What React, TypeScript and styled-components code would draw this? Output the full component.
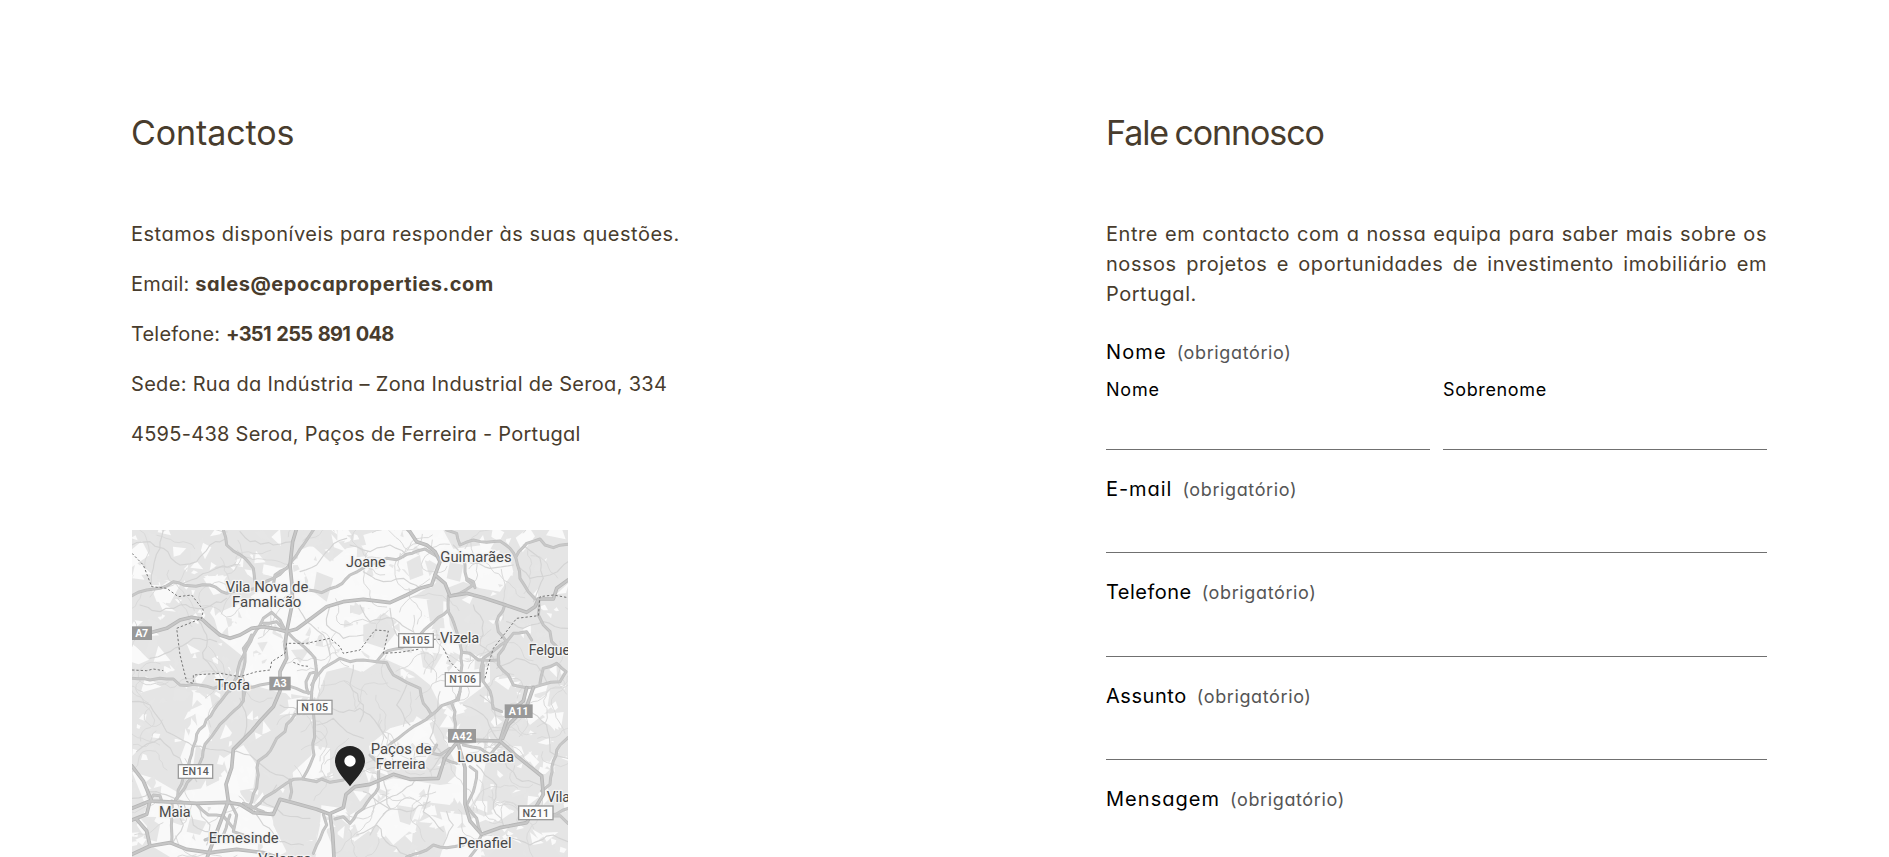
import React from 'react';
import styled, { createGlobalStyle } from 'styled-components';

const GlobalStyle = createGlobalStyle`
  html, body { margin: 0; padding: 0; background: #fff; overflow: hidden; }
  * { box-sizing: border-box; }
`;

const Page = styled.main`
  display: grid;
  grid-template-columns: 661px 661px;
  column-gap: 314px;
  height: 857px;
  padding: 112px 0 0 131px;
  overflow: hidden;
  font-family: Inter, 'Open Sans', sans-serif;
  font-feature-settings: 'cv11';
  font-size: 20px;
  line-height: 30px;
  color: #483c2d;
`;

const Column = styled.section`
  display: flex;
  flex-direction: column;
`;

const Heading = styled.h2<{ $tracking: number }>`
  margin: 0 0 65px;
  font-size: 34px;
  font-weight: 400;
  line-height: 42px;
  font-feature-settings: normal;
  letter-spacing: ${(p) => p.$tracking}px;
  word-spacing: -2px;
`;

const ContactList = styled.div`
  display: flex;
  flex-direction: column;
  gap: 20px;
  margin-bottom: 81px;
`;

const ContactLine = styled.p<{ $tracking: number }>`
  margin: 0;
  white-space: nowrap;
  letter-spacing: ${(p) => p.$tracking}px;
`;

const Strong = styled.strong<{ $tracking: number; $wordGap?: number }>`
  font-weight: 700;
  letter-spacing: ${(p) => p.$tracking}px;
  word-spacing: ${(p) => p.$wordGap ?? 0}px;
`;

const MapFrame = styled.div`
  flex: none;
  width: 436px;
  height: 327px;
  margin-left: 1px;
  overflow: hidden;
`;

const Intro = styled.p`
  margin: 0 0 28px;
  text-align: justify;
  letter-spacing: 0.54px;
`;

const Form = styled.form`
  display: flex;
  flex-direction: column;
  gap: 24.3px;
`;

const Field = styled.div`
  display: flex;
  flex-direction: column;
`;

const Label = styled.label<{ $tracking: number }>`
  display: flex;
  align-items: baseline;
  height: 30px;
  color: #000;
  letter-spacing: ${(p) => p.$tracking}px;
`;

const Required = styled.span`
  margin-left: 10px;
  font-size: 18px;
  line-height: 22px;
  letter-spacing: 0.62px;
  color: #555;
`;

const NameRow = styled.div`
  display: grid;
  grid-template-columns: 1fr 1fr;
  column-gap: 13px;
  margin-top: 9px;
`;

const SubLabel = styled.label<{ $tracking: number }>`
  font-size: 18px;
  line-height: 27px;
  color: #000;
  letter-spacing: ${(p) => p.$tracking}px;
`;

const Input = styled.input<{ $height: number }>`
  width: 100%;
  height: ${(p) => p.$height}px;
  padding: 0;
  border: 0;
  border-bottom: 1px solid #707070;
  border-radius: 0;
  background: transparent;
  outline: none;
`;

const MapSvg = styled.svg`
  display: block;
  width: 436px;
  height: 327px;
  font-family: Roboto, sans-serif;
`;

const openAreas = [
  '250,270 330,235 400,190 470,120 520,90 580,120 660,90 660,330 700,420 660,560 560,520 440,500 330,470 345,400 270,340',
  '500,80 545,60 600,110 650,70 760,50 840,60 900,70 930,130 890,190 780,260 660,240 560,220 520,170',
  '700,30 750,15 940,15 980,90 950,160 860,120 780,120 720,100',
  '640,270 760,240 830,215 950,230 960,300 1000,380 1080,400 1080,470 1000,530 930,540 900,480 850,440 760,400 700,440 640,400',
  '900,80 1060,60 1140,100 1150,140 1110,200 1050,190 1000,170 950,190 920,150',
  '6,740 70,760 140,800 220,790 280,760 320,790 350,830 430,850 430,900 470,980 440,996 120,996 60,960 20,900 50,850',
  '190,500 240,510 250,560 200,650 190,720 170,760 150,700 180,620',
  '280,700 340,660 380,720 370,790 310,800',
  '720,780 790,760 870,770 930,780 1000,770 960,840 880,830 860,900 790,960 740,900 660,960 660,870 710,840',
  '740,600 800,560 840,560 900,600 920,650 880,720 790,720 730,690',
  '940,640 1000,660 1060,650 1070,700 1050,800 1010,860 970,800 980,720',
  '1160,500 1230,520 1260,498 1250,560 1200,600 1170,560',
  '480,690 540,660 600,670 600,740 550,770 490,760',
  '930,860 1010,870 1060,920 1110,940 1060,996 930,996 950,930',
  '60,180 110,165 150,180 120,235 80,230',
  '220,160 280,150 290,200 250,210',
  '575,830 600,850 590,920 620,996 550,996 570,900',
];

const greenAreas = [
  '560,140 610,160 590,230 550,200',
  '700,300 760,280 800,320 760,370 700,350',
  '830,110 870,90 880,150 840,165',
  '590,440 650,425 720,450 770,440 810,480 860,500 880,540 850,590 780,610 730,650 700,680 640,650 570,650 560,520',
  '890,225 940,215 940,270 900,290',
  '1000,290 1050,300 1060,350 1000,350',
  '420,860 500,830 560,860 560,940 500,960 440,920',
  '490,775 610,770 650,800 640,850 500,830',
  '350,660 450,600 540,560 545,690 480,750 390,740',
  '960,110 1000,120 990,170 950,160',
  '180,880 230,890 210,930 170,920',
  '60,880 90,900 80,950 40,940',
  '800,840 860,850 840,900 810,890',
];

const localRoads = [
  '6,60 60,50 100,70 150,120 200,110 240,60 290,40', '100,15 90,70 70,130 65,185', '150,180 200,160 260,130 330,120',
  '30,240 90,260 150,240 220,250 290,220', '60,400 120,380 190,340 260,350', '200,280 230,330 220,400 260,445',
  '330,20 360,50 430,60 490,50', '510,140 560,120 600,70 650,40', '600,240 590,300 640,340 700,330',
  '500,240 530,290 580,330 600,390', '660,60 720,80 780,60 830,90', '700,140 760,170 820,160 870,190',
  '690,240 720,290 790,280 850,320', '780,250 800,330 850,350 930,330', '1030,240 1060,290 1050,360 1090,400',
  '970,60 1010,110 1080,130 1150,120', '1160,120 1200,160 1260,150 1314,110', '1180,60 1230,100 1240,160 1210,230',
  '1130,290 1180,310 1240,290 1314,310', '1100,430 1160,400 1220,420 1250,470', '670,420 660,480 700,540 690,590',
  '605,550 640,562 690,550 720,570 750,610 770,640', '830,480 800,540 840,600', '930,500 900,640 940,690 900,740',
  '6,530 60,540 110,620 190,665 280,675 360,690 420,740 480,765', '20,680 90,640 150,700 200,770',
  '330,520 350,580 340,640', '450,540 520,560', '6,820 80,800 160,830 190,900 260,930', '140,830 160,900 130,950',
  '200,840 240,900 230,960', '370,850 400,900 450,950 520,960', '440,780 400,830 460,870 540,880',
  '700,800 760,840 830,860 900,830', '760,760 780,850 720,930', '690,860 800,810 870,760', '900,780 880,860 940,920',
  '1040,720 1100,780 1090,850 1120,900', '1000,540 1060,570 1110,650', '1050,510 1090,540 1100,600',
  '1200,560 1250,600 1260,680 1314,700', '1110,700 1160,760 1230,780', '1130,930 1200,960 1270,930 1314,950',
  '680,930 740,900 780,960 830,990', '950,860 970,900 940,960', '560,600 610,580 650,620 700,640',
];

const streets = [
  '6,212 50,195 90,190 130,170 180,182 240,180 290,205 375,190 430,160 480,120',
  '535,195 575,203 620,185 660,150 710,122 770,100 800,104 830,88 885,72 905,85 925,97',
  '280,15 290,60 310,78 345,100 370,130 375,170', '550,15 520,60 500,90 470,130 435,150 430,180',
  '950,15 980,25 990,60 1030,45 1070,52 1110,48 1140,70 1158,100 1170,160 1195,200 1215,222',
  '1158,95 1190,55 1230,42 1245,60 1270,68 1314,58', '1000,90 1005,120 1010,160 1030,170 1035,188',
  '955,213 955,260 980,320 995,380 993,440 990,498 985,525', '1010,165 1030,180 990,205 960,213',
  '955,255 900,300 860,345 810,370 760,385 740,410 700,405 660,410 630,400 580,430 560,455 545,480',
  '740,410 770,413 790,450 830,472 870,490 880,535 905,570 935,542 980,525 990,500',
  '905,568 850,605 790,650 760,672',
  '470,320 510,355 555,400 560,440 550,470 545,500 550,560 552,690 540,720 518,761 490,763 450,788 420,808 360,853',
  '380,315 350,370 330,410 320,460', '365,330 340,370 345,410 335,450', '385,310 400,280 425,262 450,285 465,315', '400,295 440,290 470,320',
  '6,460 60,465 90,460 130,462 150,480 190,478 250,490 330,470 350,488 390,480 420,475',
  '482,485 520,500 545,505', '535,505 528,470 540,445 560,440', '320,455 300,498', '335,450 345,498 340,520',
  '295,498 250,558 200,628 185,688 160,758 135,828', '340,498 340,528 270,598 225,658 210,713 165,788 135,828',
  '495,568 470,598 465,620 440,640 430,660 410,690 385,708 380,788 355,848',
  '125,828 125,955', '60,826 70,810 90,812 95,828', '200,838 235,870 280,873 310,910', '300,830 320,870 310,920 340,930',
  '518,762 560,770 575,762 600,772 640,765', '480,765 485,800 480,820', '340,835 400,860',
  '225,945 280,930 300,870', '580,868 590,900 560,960 550,985',
  '1125,238 1100,290 1105,320 1130,350 1105,390 1105,420 1135,450 1150,480 1190,488 1240,478 1290,470 1308,440 1280,415 1240,430 1230,475',
  '1225,222 1225,270 1240,300 1260,320 1265,350 1280,365', '1050,470 1060,400 1100,370 1130,350 1150,325 1190,320 1205,345',
  '995,382 1020,385 1045,405 1100,405', '720,690 750,718 745,788 700,850 680,865 660,895 640,875 615,882',
  '965,535 975,560 975,615', '1060,420 1060,470 1080,498 1090,550 1115,560',
  '1235,798 1260,778 1270,708 1290,660 1314,638', '1240,880 1314,850', '1240,875 1290,872 1314,895',
  '1055,928 1040,970 1020,996', '1000,960 950,968 910,960 890,975 850,988 830,996', '1020,725 1040,740 1030,800 1010,840 1040,880 1055,928',
  '920,660 905,685 930,690 960,670', '940,700 980,715', '1000,660 1050,670 1080,690 1110,655',
];

const highways = [
  '6,322 66,322 110,310 150,285 185,277 215,282 240,305 270,330 300,340 330,330 365,310 400,305 440,312 470,320 500,312 550,275 590,245 640,230 700,223 780,233 830,210 870,190 905,180 915,150 930,110 915,80 890,60 860,50 840,20 830,10',
  '915,150 945,175 960,213 1010,205 1060,218 1120,238 1190,262 1215,245 1225,222 1270,222 1280,190 1314,165',
  '500,10 488,50 480,120 485,170 488,230 478,280 470,320 465,360 470,400 450,440 450,498 430,545 390,588 365,618 310,673 305,728 288,778 295,828 280,868 250,948 232,996',
  '6,723 40,768 65,828 100,830 200,835 290,832 330,838 370,863 430,868 450,823 490,833 560,853 600,868 608,928 612,996',
  '6,850 60,828 50,868 6,885', '20,883 50,918 60,963', '6,988 60,963 120,953 170,973 240,983 320,973 400,983 440,996',
  '600,866 640,848 648,808 675,785 720,778 790,748 840,763 925,760 945,698 980,653 1040,646 1110,648 1160,693 1235,753 1240,808 1190,893 1110,908 1055,928 1020,888 1005,838 1005,728 985,658',
  '1110,648 1125,600 1140,560 1180,528 1190,488', '1118,640 1135,600 1190,545 1210,488',
];

const boundaries = [
  '6,85 40,120 65,185 110,190 145,215 185,210 220,255 215,280 140,310 150,390 170,470 190,475 190,450 270,445 330,455 380,440 420,435 425,410 465,385 470,355 530,355 600,340 630,365 640,385 690,375 735,315 775,318 760,385 810,382 870,372',
  '910,343 930,343', '940,370 960,410 990,440', '1065,460 1075,420 1090,370 1160,280 1225,272 1230,215 1270,210 1314,218', '6,435 50,437 70,432 100,437',
  '490,412 515,422 535,424',
];

const places: { text: string; x: number; y: number; width: number }[] = [
  { text: 'Vila Nova de', x: 287, y: 202, width: 248 },
  { text: 'Famalicão', x: 306, y: 247, width: 208 },
  { text: 'Joane', x: 648, y: 127, width: 119 },
  { text: 'Guimarães', x: 931, y: 112, width: 214 },
  { text: 'Vizela', x: 930, y: 355, width: 118 },
  { text: 'Felgue', x: 1196, y: 390, width: 124 },
  { text: 'Trofa', x: 255, y: 496, width: 105 },
  { text: 'Paços de', x: 722, y: 688, width: 183 },
  { text: 'Ferreira', x: 737, y: 733, width: 150 },
  { text: 'Lousada', x: 982, y: 712, width: 170 },
  { text: 'Vila', x: 1250, y: 830, width: 70 },
  { text: 'Maia', x: 87, y: 876, width: 95 },
  { text: 'Ermesinde', x: 236, y: 955, width: 210 },
  { text: 'Penafiel', x: 984, y: 970, width: 161 },
  { text: 'Valongo', x: 385, y: 1016, width: 160 },
];

const shields: { text: string; x: number; y: number; w: number; motorway?: boolean }[] = [
  { text: 'A7', x: 4, y: 304, w: 62, motorway: true },
  { text: 'A3', x: 418, y: 455, w: 64, motorway: true },
  { text: 'A11', x: 1124, y: 538, w: 84, motorway: true },
  { text: 'A42', x: 954, y: 612, w: 84, motorway: true },
  { text: 'N105', x: 806, y: 326, w: 104 },
  { text: 'N106', x: 946, y: 443, w: 104 },
  { text: 'N105', x: 502, y: 526, w: 104 },
  { text: 'EN14', x: 145, y: 719, w: 103 },
  { text: 'N211', x: 1166, y: 843, w: 103 },
];

// Repeatable pseudo-random numbers, so the terrain is the same on every render.
function sequence(seed: number) {
  let s = seed;
  return () => {
    s = (s * 16807) % 2147483647;
    return s / 2147483647;
  };
}

// Small irregular, sharp-cornered parcels of land.
function makeParcels(count: number, seed: number) {
  const rnd = sequence(seed);
  return Array.from({ length: count }, () => {
    const cx = rnd() * 1310;
    const cy = 15 + rnd() * 980;
    const size = 12 + rnd() * rnd() * 40;
    const corners = 3 + Math.floor(rnd() * 2);
    const turn = rnd() * 6;
    const points = Array.from({ length: corners }, (_, k) => {
      const a = turn + (k / corners) * Math.PI * 2 + rnd() * 0.9;
      const r = size * (0.2 + rnd());
      return `${(cx + Math.cos(a) * r).toFixed(0)},${(cy + Math.sin(a) * r).toFixed(0)}`;
    });
    return points.join(' ');
  });
}

// Faint country lanes that wander across the terrain.
function makeLanes(count: number, seed: number) {
  const rnd = sequence(seed);
  return Array.from({ length: count }, () => {
    let x = rnd() * 1310;
    let y = rnd() * 1000;
    let a = rnd() * 6.28;
    const points = [`${x.toFixed(0)},${y.toFixed(0)}`];
    const steps = 7 + Math.floor(rnd() * 10);
    for (let i = 0; i < steps; i += 1) {
      a += (rnd() - 0.5) * 1.5;
      x += Math.cos(a) * 14;
      y += Math.sin(a) * 14;
      points.push(`${x.toFixed(0)},${y.toFixed(0)}`);
    }
    return points.join(' ');
  });
}

// Adds small bends between the given points of a road.
function windRoads(items: string[], seed: number, amount: number) {
  const rnd = sequence(seed);
  return items.map((item) => {
    const pts = item.split(' ').map((p) => p.split(',').map(Number));
    const out: string[] = [];
    pts.forEach(([x, y], i) => {
      out.push(`${x},${y}`);
      const next = pts[i + 1];
      if (!next) return;
      const length = Math.hypot(next[0] - x, next[1] - y);
      const pieces = Math.floor(length / 17);
      for (let k = 1; k < pieces; k += 1) {
        const f = k / pieces;
        const dx = (rnd() - 0.5) * amount;
        const dy = (rnd() - 0.5) * amount;
        out.push(`${(x + (next[0] - x) * f + dx).toFixed(1)},${(y + (next[1] - y) * f + dy).toFixed(1)}`);
      }
    });
    return out.join(' ');
  });
}

const clearings = makeParcels(430, 4217);
const groves = makeParcels(200, 911);
const lanes = makeLanes(130, 3301);
const windingLocal = windRoads(localRoads, 77, 10);
const windingStreets = windRoads(streets, 123, 6);

const Lines = ({ items, color, width }: { items: string[]; color: string; width: number }) => (
  <g fill="none" stroke={color} strokeWidth={width} strokeLinejoin="round" strokeLinecap="round">
    {items.map((points) => (
      <polyline key={points} points={points} />
    ))}
  </g>
);

const Areas = ({ items, color }: { items: string[]; color: string }) => (
  <g fill={color}>
    {items.map((points, i) => (
      <polygon key={i} points={points} />
    ))}
  </g>
);

const LocationMap = () => (
  <MapSvg viewBox="6 15 1308 981" role="img" aria-label="Mapa">
    <rect x="0" y="0" width="1320" height="1000" fill="#e5e5e5" />
    <Areas items={openAreas} color="#f9f9f9" />
    <Areas items={groves} color="#e6e6e6" />
    <Areas items={clearings} color="#fafafa" />
    <Areas items={greenAreas} color="#e5e5e5" />
    <Lines items={lanes} color="#dadada" width={3} />
    <Lines items={windingLocal} color="#d4d4d4" width={3.5} />
    <Lines items={windingStreets} color="#bfbfbf" width={9} />
    <Lines items={windingStreets} color="#c8c8c8" width={5} />
    <Lines items={highways} color="#b6b6b6" width={11} />
    <Lines items={highways} color="#c6c6c6" width={6} />
    <g fill="none" stroke="#777" strokeWidth="3" strokeDasharray="7 6">
      {boundaries.map((points) => (
        <polyline key={points} points={points} />
      ))}
    </g>
    {shields.map(({ text, x, y, w, motorway }) => (
      <g key={`${text}-${x}`}>
        <rect x={x} y={y} width={w} height={41} fill={motorway ? '#999' : '#fcfcfc'} stroke={motorway ? 'none' : '#9b9b9b'} strokeWidth="4" />
        <text
          x={x + w / 2}
          y={y + 32}
          textAnchor="middle"
          fontSize="32"
          fontWeight={motorway ? 700 : 500}
          fill={motorway ? '#fff' : '#5c5c5c'}
          textLength={w - (motorway ? 24 : 23)}
        >
          {text}
        </text>
      </g>
    ))}
    <g fontSize="42" fill="#484848" stroke="#f4f4f4" strokeWidth="8" strokeLinejoin="round" paintOrder="stroke">
      {places.map(({ text, x, y, width }) => (
        <text key={`${text}-${x}`} x={x} y={y} textLength={width} lengthAdjust="spacingAndGlyphs">
          {text}
        </text>
      ))}
    </g>
    <path d="M660 663C635 663 615 683 615 708C615 739 650 768 660 784C670 768 705 739 705 708C705 683 685 663 660 663Z" fill="#222" />
    <circle cx="660" cy="708" r="17" fill="#fff" />
  </MapSvg>
);

const fields = [
  { id: 'email', label: 'E-mail', tracking: 0.95 },
  { id: 'telefone', label: 'Telefone', tracking: 0.48 },
  { id: 'assunto', label: 'Assunto', tracking: 0.55 },
  { id: 'mensagem', label: 'Mensagem', tracking: 1.03 },
];

export default function App() {
  return (
    <>
      <GlobalStyle />
      <Page>
        <Column>
          <Heading $tracking={-0.1}>Contactos</Heading>
          <ContactList>
            <ContactLine $tracking={0.5}>Estamos disponíveis para responder às suas questões.</ContactLine>
            <ContactLine $tracking={0.2}>
              Email: <Strong $tracking={0.57}>sales@epocaproperties.com</Strong>
            </ContactLine>
            <ContactLine $tracking={0.18}>
              Telefone: <Strong $tracking={-0.75} $wordGap={1.6}>+351 255 891 048</Strong>
            </ContactLine>
            <ContactLine $tracking={0.31}>Sede: Rua da Indústria – Zona Industrial de Seroa, 334</ContactLine>
            <ContactLine $tracking={0.27}>4595-438 Seroa, Paços de Ferreira - Portugal</ContactLine>
          </ContactList>
          <MapFrame>
            <LocationMap />
          </MapFrame>
        </Column>
        <Column>
          <Heading $tracking={-1.1}>Fale connosco</Heading>
          <Intro>
            Entre em contacto com a nossa equipa para saber mais sobre os nossos projetos e oportunidades de investimento
            imobiliário em Portugal.
          </Intro>
          <Form>
            <Field>
              <Label as="div" $tracking={1.1}>
                Nome <Required>(obrigatório)</Required>
              </Label>
              <NameRow>
                <Field>
                  <SubLabel htmlFor="nome" $tracking={0.8}>Nome</SubLabel>
                  <Input id="nome" $height={46.7} />
                </Field>
                <Field>
                  <SubLabel htmlFor="sobrenome" $tracking={0.65}>Sobrenome</SubLabel>
                  <Input id="sobrenome" $height={46.7} />
                </Field>
              </NameRow>
            </Field>
            {fields.map(({ id, label, tracking }) => (
              <Field key={id}>
                <Label htmlFor={id} $tracking={tracking}>
                  {label} <Required>(obrigatório)</Required>
                </Label>
                <Input id={id} $height={49.2} />
              </Field>
            ))}
          </Form>
        </Column>
      </Page>
    </>
  );
}
